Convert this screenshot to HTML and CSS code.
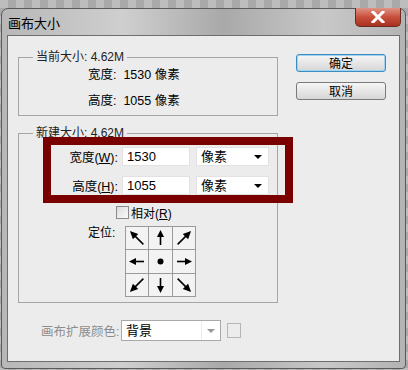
FILE: index.html
```html
<!DOCTYPE html>
<html lang="zh-CN">
<head>
    <meta charset="UTF-8">
    <title>画布大小</title>
    <link rel="stylesheet" href="styles.css">
</head>
<body>
    <div class="window">
        <div class="titlebar">
            <span class="title">画布大小</span>
            <div class="close">
                <svg width="16" height="12" viewBox="0 0 16 12"><path d="M3 1 L13 11 M13 1 L3 11" stroke="#fff" stroke-width="3" stroke-linecap="square"/></svg>
            </div>
        </div>
        <div class="client">
            <div class="left">
                <!-- current size -->
                <fieldset class="group current">
                    <legend>当前大小: 4.62M</legend>
                    <div class="info-list">
                        <div class="info">宽度: &nbsp;1530 像素</div>
                        <div class="info">高度: &nbsp;1055 像素</div>
                    </div>
                </fieldset>

                <!-- new size -->
                <fieldset class="group newsize">
                    <legend>新建大小: 4.62M</legend>
                    <div class="field">
                        <label>宽度(<u>W</u>):</label>
                        <div class="input">1530</div>
                        <div class="select">像素<span class="caret"></span></div>
                    </div>
                    <div class="field">
                        <label>高度(<u>H</u>):</label>
                        <div class="input">1055</div>
                        <div class="select">像素<span class="caret"></span></div>
                    </div>
                    <div class="check-row">
                        <span class="checkbox"></span>
                        <span>相对(<u>R</u>)</span>
                    </div>
                    <div class="anchor-row">
                        <span class="anchor-label">定位:</span>
                        <svg class="anchor" width="71" height="71" viewBox="0 0 71 71">
                            <defs>
                                <g id="up">
                                    <path d="M0 7 V-2" stroke="#000" stroke-width="1.6"/>
                                    <polygon points="-3.5,-1 3.5,-1 0,-8" fill="#000"/>
                                </g>
                                <g id="diag">
                                    <path d="M0 9 V-3" stroke="#000" stroke-width="1.6"/>
                                    <polygon points="-3.8,-2 3.8,-2 0,-10" fill="#000"/>
                                </g>
                            </defs>
                            <rect x="0.5" y="0.5" width="70" height="70" fill="#f3f3f3" stroke="#9a9a9a"/>
                            <path d="M23.5 0 V71 M47.5 0 V71 M0 23.5 H71 M0 47.5 H71" stroke="#9a9a9a"/>
                            <use href="#diag" transform="translate(12 12) rotate(-45)"/>
                            <use href="#up" transform="translate(35.5 12)"/>
                            <use href="#diag" transform="translate(59 12) rotate(45)"/>
                            <use href="#up" transform="translate(12 35.5) rotate(-90)"/>
                            <circle cx="35.5" cy="35.5" r="3" fill="#000"/>
                            <use href="#up" transform="translate(59 35.5) rotate(90)"/>
                            <use href="#diag" transform="translate(12 59) rotate(-135)"/>
                            <use href="#up" transform="translate(35.5 59) rotate(180)"/>
                            <use href="#diag" transform="translate(59 59) rotate(135)"/>
                        </svg>
                    </div>
                </fieldset>

                <div class="ext-row">
                    <span class="ext-label">画布扩展颜色:</span>
                    <div class="ext-select">背景<span class="ext-btn"><span class="caret grey"></span></span></div>
                    <span class="swatch"></span>
                </div>
            </div>

            <div class="buttons">
                <button class="btn default">确定</button>
                <button class="btn">取消</button>
            </div>

            <!-- highlight drawn over the dialog -->
            <div class="highlight"></div>
        </div>
    </div>
</body>
</html>
```

FILE: styles.css
```css
body {
    margin: 0;
    width: 408px;
    height: 370px;
    overflow: hidden;
    font-family: "Liberation Sans", "Noto Sans CJK SC", sans-serif;
    font-size: 12px;
    color: #000;
    background-color: #bdbdbd;
    background-image:
        linear-gradient(45deg, #a9a9a9 25%, transparent 25%, transparent 75%, #a9a9a9 75%),
        linear-gradient(45deg, #a9a9a9 25%, transparent 25%, transparent 75%, #a9a9a9 75%);
    background-size: 16px 16px;
    background-position: 0 0, 8px 8px;
}
.window {
    margin: 8px 0 0 1px;
    width: 405px;
    height: 361px;
    box-sizing: border-box;
    border: 1px solid #5a5a5a;
    border-radius: 7px 7px 4px 4px;
    background: linear-gradient(90deg, #b7b7b7, #cfcfcf 30%, #a9a9a9 55%, #c8c8c8 80%, #b3b3b3);
    padding: 0 5px 6px 5px;
}
.titlebar {
    height: 26px;
    display: flex;
    align-items: center;
    justify-content: space-between;
}
.title {
    font-size: 13px;
    margin-left: 1px;
    margin-top: 1px;
}
.close {
    align-self: flex-start;
    margin-top: -1px;
    margin-right: -1px;
    width: 46px;
    height: 19px;
    box-sizing: border-box;
    border: 1px solid #6b2a22;
    border-top: none;
    border-radius: 0 0 5px 5px;
    background: linear-gradient(#dd9384, #c9503c 50%, #a8301f);
    display: flex;
    align-items: center;
    justify-content: center;
}
.client {
    position: relative;
    height: 327px;
    box-sizing: border-box;
    border: 1px solid #6e6e6e;
    background: #ececec;
    display: flex;
    padding-left: 10px;
}
.left {
    width: 260px;
}
.group {
    margin: 0;
    padding: 0;
    border: 1px solid #a5a5a5;
    min-width: 0;
}
.group legend {
    margin-left: 14px;
    padding: 0 3px;
    line-height: 14px;
    color: #222;
}
.current {
    margin-top: 14px;
    height: 66px;
    box-sizing: border-box;
}
.info-list {
    padding-left: 69px;
}
.info {
    line-height: 22px;
    margin-bottom: 4px;
    font-size: 12.5px;
}
.newsize {
    margin-top: 10px;
    height: 177px;
    box-sizing: border-box;
    padding-top: 7px;
}
.field {
    display: flex;
    align-items: center;
    height: 19px;
    margin-bottom: 10px;
}
.field label {
    width: 99px;
    text-align: right;
    margin-right: 4px;
    flex: none;
    font-size: 12.5px;
}
.input {
    width: 68px;
    height: 19px;
    box-sizing: border-box;
    background: #fff;
    border: 1px solid #e2e2e2;
    padding-left: 4px;
    line-height: 17px;
    font-size: 13px;
}
.select {
    width: 73px;
    height: 19px;
    margin-left: 6px;
    box-sizing: border-box;
    background: #fff;
    border: 1px solid #e2e2e2;
    padding-left: 4px;
    line-height: 17px;
    font-size: 13px;
    display: flex;
    justify-content: space-between;
    align-items: center;
}
.caret {
    width: 0;
    height: 0;
    border-left: 4px solid transparent;
    border-right: 4px solid transparent;
    border-top: 4px solid #000;
    margin-right: 6px;
}
.caret.grey {
    border-top-color: #9a9a9a;
    margin: 0;
}
.check-row {
    display: flex;
    align-items: center;
    height: 16px;
    margin-top: -1px;
    padding-left: 97px;
    gap: 2px;
}
.checkbox {
    width: 11px;
    height: 11px;
    border: 1px solid #8a8a8a;
    background: linear-gradient(135deg, #dcdcdc, #fafafa);
}
.anchor-row {
    display: flex;
    margin-top: 6px;
    padding-left: 69px;
}
.anchor-label {
    width: 37px;
    line-height: 14px;
}
.anchor {
    display: block;
}
.ext-row {
    display: flex;
    align-items: center;
    margin-top: 17px;
    padding-left: 23px;
}
.ext-label {
    color: #8c8c8c;
    width: 80px;
    font-size: 12.5px;
}
.ext-select {
    width: 100px;
    height: 21px;
    box-sizing: border-box;
    border: 1px solid #a9a9a9;
    background: #fff;
    padding-left: 4px;
    line-height: 19px;
    font-size: 13px;
    display: flex;
    justify-content: space-between;
}
.ext-btn {
    width: 18px;
    border-left: 1px solid #ececec;
    display: flex;
    align-items: center;
    justify-content: center;
}
.swatch {
    width: 12px;
    height: 13px;
    margin-left: 6px;
    border: 1px solid #b5b5b5;
    background: #ececec;
}
.buttons {
    margin-left: 18px;
    padding-top: 18px;
    display: flex;
    flex-direction: column;
    gap: 10px;
}
.btn {
    width: 90px;
    height: 18px;
    padding: 0;
    font-family: "Noto Sans CJK SC", sans-serif;
    font-size: 12px;
    line-height: 14px;
    border: 1px solid #7a7a7a;
    border-radius: 3px;
    background: linear-gradient(#f6f6f6, #e6e6e6 50%, #d6d6d6);
    color: #000;
}
.btn.default {
    border-color: #3c8cc4;
    box-shadow: inset 0 0 0 1px #9fd3f2;
}
.highlight {
    position: absolute;
    left: 35px;
    top: 101px;
    width: 250px;
    height: 66px;
    box-sizing: border-box;
    border: 8px solid #7a0000;
}
```
